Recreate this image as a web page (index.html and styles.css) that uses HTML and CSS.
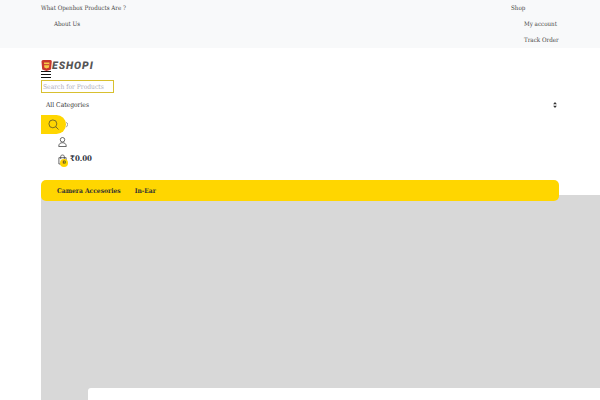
FILE: index.html
```html
<!DOCTYPE html>
<html lang="en">
<head>
<meta charset="utf-8">
<title>Eshopi</title>
<link rel="stylesheet" href="styles.css">
</head>
<body>
<div class="topbar">
  <div class="topbar-inner">
    <ul class="toplinks">
      <li class="plain">What Openbox Products Are ?</li>
      <li>About Us</li>
    </ul>
    <ul class="toplinks right">
      <li class="plain">Shop</li>
      <li>My account</li>
      <li>Track Order</li>
    </ul>
  </div>
</div>
<header class="header">
  <div class="logo">
    <svg class="logo-icon" viewBox="0 0 11 11"><path d="M.5 1.500Q.5 0 2 0h7.500Q11 0 10.800 1.500L10 9.500 5.500 11 1.200 9.500z" fill="#c8372f"/><path d="M3 2.500h5.500L8 7.500 5.500 8.500 3.300 7.500z" fill="#f6c94a"/><path d="M3 4.700h5" stroke="#c8372f" stroke-width="1"/></svg>
    <span class="logo-text">ESHOPI</span>
  </div>
  <button class="menu" aria-label="Menu"><span></span><span></span><span></span></button>
  <input class="search" type="text" placeholder="Search for Products">
  <div class="select">
    <span>All Categories</span>
    <svg class="arrows" viewBox="0 0 5 8"><path d="M2.500 0 5 3H0zM2.500 8 0 5h5z" fill="#333"/></svg>
  </div>
  <div class="search-row">
    <button class="search-btn" aria-label="Search">
      <svg viewBox="0 0 12 12" class="glass"><circle cx="5.300" cy="5.300" r="4.300" fill="none" stroke="#333" stroke-width=".7"/><path d="M8.500 8.500 11.500 11.500" stroke="#333" stroke-width=".7"/></svg>
    </button>
    <svg class="wish" viewBox="0 0 3 8"><path d="M0 .5C2 .5 2.800 2 2.500 3.500 2.200 5 1 6.500 0 7.500" fill="none" stroke="#444" stroke-width=".8"/></svg>
  </div>
  <div class="icon-row">
    <svg class="user" viewBox="0 0 10 11"><circle cx="5" cy="3" r="2.500" fill="none" stroke="#333" stroke-width=".8"/><path d="M.8 10.500C.8 7.500 2.500 6.300 5 6.300S9.200 7.500 9.200 10.500z" fill="none" stroke="#333" stroke-width=".8"/></svg>
  </div>
  <div class="cart-row">
    <div class="bag">
      <svg viewBox="0 0 10 11"><path d="M1 3.500h8v7H1z" fill="none" stroke="#333" stroke-width=".8"/><path d="M3 5V2.200C3 1 4 .5 5 .5S7 1 7 2.200V5" fill="none" stroke="#333" stroke-width=".8"/></svg>
      <span class="badge">0</span>
    </div>
    <span class="price">₹0.00</span>
  </div>
</header>
<main class="main">
  <nav class="crumbs">
    <span>Camera Accesories</span>
    <span>In-Ear</span>
  </nav>
  <section class="hero">
    <div class="card"></div>
  </section>
</main>
</body>
</html>
```
FILE: styles.css
```css
* { box-sizing: border-box; }
html, body { margin: 0; padding: 0; height: 400px; overflow: hidden; background: #fff; }
body { font-family: "DejaVu Serif Condensed", "DejaVu Serif", serif; font-stretch: condensed; font-size: 6.670px; color: #333; text-rendering: geometricPrecision; opacity: .999; }
ul { list-style: none; margin: 0; padding: 0; }
button { border: 0; padding: 0; background: none; }

.topbar { background: #f8f9fa; height: 48px; padding: 1px 41px 0; }
.topbar-inner { display: flex; justify-content: space-between; }
.toplinks { width: 88px; line-height: 16px; white-space: nowrap; color: #444; font-size: 6.200px; }
.toplinks.right { width: 48px; }
.toplinks li { padding-left: 13px; }
.toplinks li.plain { padding-left: 0; }

.header { padding: 11px 41px 0; height: 132px; }
.logo { display: flex; align-items: center; height: 12px; }
.logo-icon { width: 11px; height: 11px; }
.logo-text { font: italic 900 10.500px/12px Roboto, sans-serif; letter-spacing: .95px; color: #555; padding-top: 1px; }
.menu { display: flex; flex-direction: column; gap: 2px; width: 10px; }
.menu span { display: block; height: 1px; width: 10px; background: #111; }
.search { display: block; width: 73px; height: 13px; margin-top: 2px; padding: 0 1px; border: 1px solid #d8c030; background: #fff; font: 6.670px "DejaVu Serif Condensed", "DejaVu Serif", serif; text-rendering: geometricPrecision; outline: 0; border-radius: 0; }
.search::placeholder { color: #b0b0bc; opacity: 1; }
.select { display: flex; justify-content: space-between; align-items: center; height: 22px; padding: 1px 1px 0 5px; }
.arrows { width: 4px; height: 6px; margin-right: 1px; }
.search-row { display: flex; align-items: center; height: 19px; }
.search-btn { width: 25px; height: 19px; display: flex; align-items: center; justify-content: center; background: #ffd600; border-radius: 0 10px 10px 0; }
.glass { width: 11px; height: 11px; }
.wish { width: 2px; height: 6px; }
.icon-row { display: flex; padding-left: 17px; height: 20px; padding-top: 3px; }
.user { width: 9px; height: 10px; }
.cart-row { display: flex; align-items: flex-start; padding-left: 17px; height: 20px; }
.bag { position: relative; width: 11px; height: 12px; }
.bag svg { width: 9px; height: 11px; display: block; }
.badge { position: absolute; left: 2px; top: 5px; width: 8px; height: 8px; border-radius: 50%; background: #ffd600; font-size: 5px; font-weight: 700; line-height: 8px; text-align: center; color: #333; }
.price { font-size: 7.800px; font-weight: 700; line-height: 8px; margin: 1px 0 0 1px; color: #2f3542; }

.main { padding-left: 41px; }
.crumbs { position: relative; z-index: 1; display: flex; gap: 14px; align-items: center; width: 518px; height: 21px; margin-bottom: -6px; background: #ffd600; padding-left: 16px; border-radius: 5px; font-weight: 700; color: #333; }
.hero { background: #d8d8d8; height: 205px; padding: 193px 0 0 47px; }
.card { height: 12px; background: #fff; border-radius: 3px 0 0 0; }
```
